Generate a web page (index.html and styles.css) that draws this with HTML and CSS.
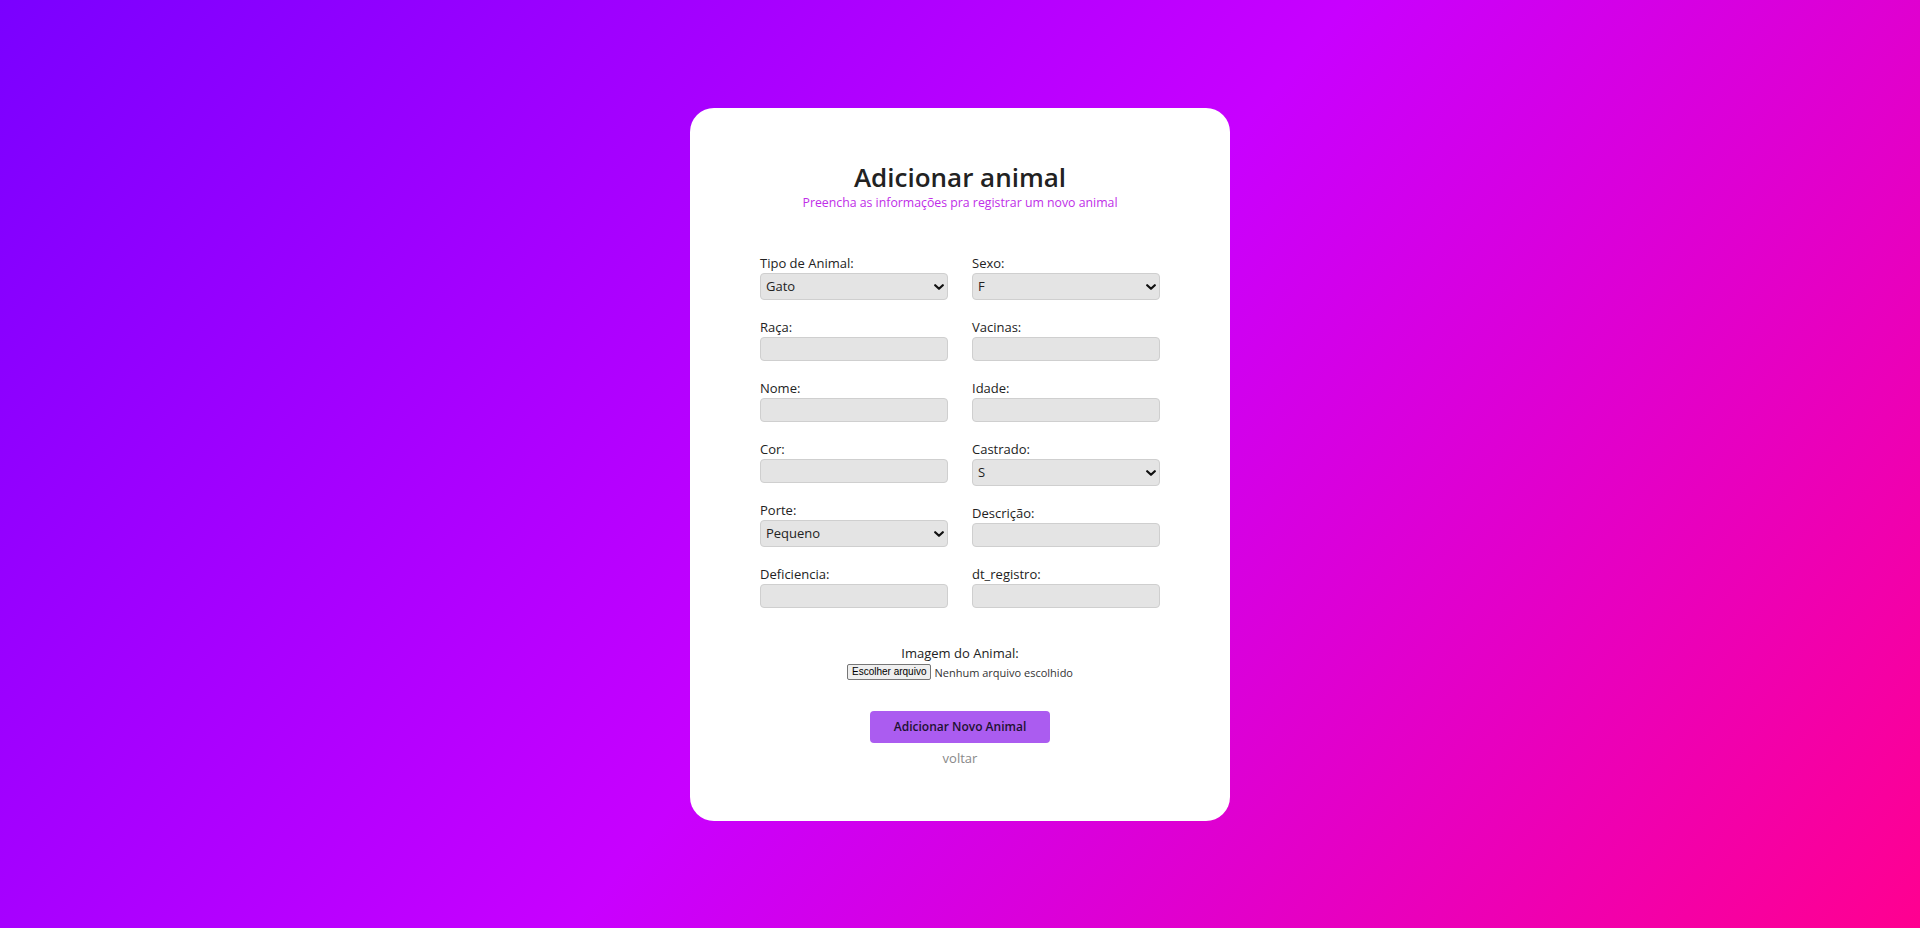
FILE: index.html
```html
<!DOCTYPE html>
<html lang="pt-BR">
<head>
<meta charset="utf-8">
<title>Adicionar animal</title>
<link rel="stylesheet" href="styles.css">
</head>
<body>
<main class="card">
  <header class="card-header">
    <h1 class="title">Adicionar animal</h1>
    <p class="subtitle">Preencha as informações pra registrar um novo animal</p>
  </header>
  <form class="form">
    <div class="grid">
      <div class="col">
        <div class="field">
          <label class="label">Tipo de Animal:</label>
          <div class="select-wrap">
            <select class="control select"><option>Gato</option><option>Cachorro</option></select>
            <svg class="chev" viewBox="0 0 10 6" width="10" height="6"><path d="M1.2 1.2l3.8 3.6 3.8-3.6" fill="none" stroke="#111" stroke-width="2.2" stroke-linecap="round" stroke-linejoin="round"/></svg>
          </div>
        </div>
        <div class="field">
          <label class="label">Raça:</label>
          <input class="control input" type="text">
        </div>
        <div class="field">
          <label class="label">Nome:</label>
          <input class="control input" type="text">
        </div>
        <div class="field">
          <label class="label">Cor:</label>
          <input class="control input" type="text">
        </div>
        <div class="field">
          <label class="label">Porte:</label>
          <div class="select-wrap">
            <select class="control select"><option>Pequeno</option><option>Médio</option><option>Grande</option></select>
            <svg class="chev" viewBox="0 0 10 6" width="10" height="6"><path d="M1.2 1.2l3.8 3.6 3.8-3.6" fill="none" stroke="#111" stroke-width="2.2" stroke-linecap="round" stroke-linejoin="round"/></svg>
          </div>
        </div>
        <div class="field">
          <label class="label">Deficiencia:</label>
          <input class="control input" type="text">
        </div>
      </div>
      <div class="col">
        <div class="field">
          <label class="label">Sexo:</label>
          <div class="select-wrap">
            <select class="control select"><option>F</option><option>M</option></select>
            <svg class="chev" viewBox="0 0 10 6" width="10" height="6"><path d="M1.2 1.2l3.8 3.6 3.8-3.6" fill="none" stroke="#111" stroke-width="2.2" stroke-linecap="round" stroke-linejoin="round"/></svg>
          </div>
        </div>
        <div class="field">
          <label class="label">Vacinas:</label>
          <input class="control input" type="text">
        </div>
        <div class="field">
          <label class="label">Idade:</label>
          <input class="control input" type="text">
        </div>
        <div class="field">
          <label class="label">Castrado:</label>
          <div class="select-wrap">
            <select class="control select"><option>S</option><option>N</option></select>
            <svg class="chev" viewBox="0 0 10 6" width="10" height="6"><path d="M1.2 1.2l3.8 3.6 3.8-3.6" fill="none" stroke="#111" stroke-width="2.2" stroke-linecap="round" stroke-linejoin="round"/></svg>
          </div>
        </div>
        <div class="field">
          <label class="label">Descrição:</label>
          <input class="control input" type="text">
        </div>
        <div class="field">
          <label class="label">dt_registro:</label>
          <input class="control input" type="text">
        </div>
      </div>
    </div>
    <div class="image-field">
      <span class="image-label">Imagem do Animal:</span>
      <label class="file">
        <input class="file-input" type="file">
        <span class="file-btn">Escolher arquivo</span>
        <span class="file-text">Nenhum arquivo escolhido</span>
      </label>
    </div>
    <button class="submit" type="button">Adicionar Novo Animal</button>
    <a class="back" href="#">voltar</a>
  </form>
</main>
</body>
</html>
```
FILE: styles.css
```css
* { box-sizing: border-box; }

html, body { height: 100%; }

body {
  margin: 0;
  min-height: 100vh;
  display: flex;
  align-items: center;
  justify-content: center;
  background: linear-gradient(130deg, #7a00ff 0%, #c800ff 50%, #ff0090 100%);
  font-family: "Open Sans", "Noto Sans", sans-serif;
  color: #222;
}

.card {
  width: 540px;
  background: #fff;
  border-radius: 24px;
  padding: 54px 70px 54px;
  display: flex;
  flex-direction: column;
  align-items: center;
}

.card-header {
  text-align: center;
}

.title {
  margin: 0;
  font-size: 26px;
  line-height: 30px;
  font-weight: 600;
  color: #222;
}

.subtitle {
  margin: 3px 0 0;
  font-size: 12.3px;
  line-height: 16px;
  color: #c02ee8;
}

.form {
  width: 400px;
  margin-top: 44px;
  display: flex;
  flex-direction: column;
  align-items: center;
}

.grid {
  width: 100%;
  display: grid;
  grid-template-columns: 1fr 1fr;
  column-gap: 24px;
}

.col {
  display: flex;
  flex-direction: column;
  gap: 19px;
}

.field {
  display: flex;
  flex-direction: column;
}

.label {
  display: block;
  font-size: 13px;
  line-height: 16px;
  margin-bottom: 2px;
  color: #222;
}

.control {
  width: 100%;
  background: #e4e4e4;
  border: 1px solid #cfcfcf;
  border-radius: 4px;
  font-family: inherit;
  font-size: 13px;
  color: #222;
  outline: none;
}

.input {
  height: 24px;
  padding: 0 6px;
}

.select-wrap {
  position: relative;
}

.select {
  height: 27px;
  padding: 0 20px 0 5px;
  appearance: none;
  -webkit-appearance: none;
}

.chev {
  position: absolute;
  right: 4px;
  top: 11px;
  pointer-events: none;
}

.image-field {
  margin-top: 37px;
  display: flex;
  flex-direction: column;
  align-items: center;
}

.image-label {
  font-size: 13px;
  line-height: 17px;
  color: #222;
}

.file {
  margin-top: 3px;
  display: flex;
  align-items: center;
  gap: 3px;
  height: 15px;
}

.file-input {
  display: none;
}

.file-btn {
  font-family: "Liberation Sans", Arial, sans-serif;
  font-size: 10px;
  line-height: 12px;
  padding: 1px 4px;
  background: #efefef;
  border: 1px solid #767676;
  border-radius: 2px;
  color: #000;
}

.file-text {
  font-size: 11px;
  line-height: 15px;
  color: #333;
}

.submit {
  margin-top: 31px;
  width: 180px;
  height: 32px;
  background: #ab5cf0;
  border: none;
  border-radius: 4px;
  font-family: inherit;
  font-size: 12px;
  font-weight: 600;
  color: #1e1230;
}

.back {
  margin-top: 7px;
  font-size: 13px;
  line-height: 17px;
  color: #888;
  text-decoration: none;
}
```
